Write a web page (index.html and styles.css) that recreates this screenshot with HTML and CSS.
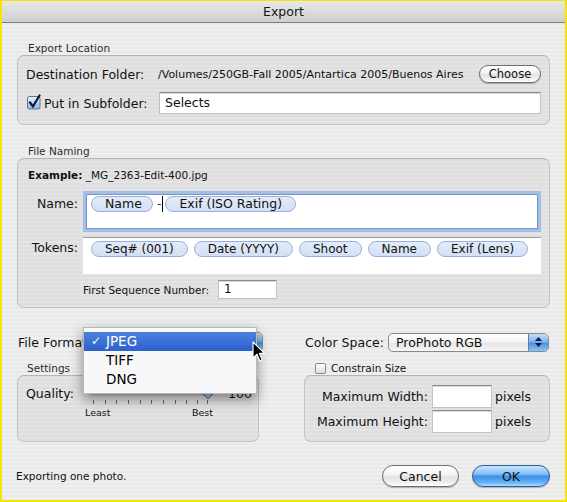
FILE: index.html
```html
<!DOCTYPE html>
<html>
<head>
<meta charset="utf-8">
<title>Export</title>
<link rel="stylesheet" href="styles.css">
</head>
<body>
<div class="frame">
  <div class="titlebar">Export</div>
  <div class="content">
    <div class="group-label">Export Location</div>
    <div class="box loc">
      <div class="loc-grid">
        <span class="lbl">Destination Folder:</span>
        <span class="path">/Volumes/250GB-Fall 2005/Antartica 2005/Buenos Aires</span>
        <span class="btn choose">Choose</span>
        <span class="lbl sub-lbl">
          <svg class="check-big" width="16" height="16" viewBox="0 0 16 16">
            <defs>
              <linearGradient id="cbg" x1="0" y1="0" x2="0" y2="1">
                <stop offset="0" stop-color="#eaf2fd"/>
                <stop offset="0.5" stop-color="#b9d3f2"/>
                <stop offset="1" stop-color="#8fb6e8"/>
              </linearGradient>
            </defs>
            <rect x="1.5" y="2.5" width="12.5" height="12.5" rx="2" fill="url(#cbg)" stroke="#59708f"/>
            <path d="M4 8.5 L7 12.5 L13.5 1.5" fill="none" stroke="#0d1a33" stroke-width="2.2" stroke-linecap="round" stroke-linejoin="round"/>
          </svg>Put in Subfolder:</span>
        <span class="field sub-field">Selects</span>
      </div>
    </div>

    <div class="group-label gap">File Naming</div>
    <div class="box naming">
      <div class="example"><b>Example:</b> _MG_2363-Edit-400.jpg</div>
      <div class="nrow">
        <span class="rlabel">Name:</span>
        <div class="name-field">
          <span class="pill pill-name">Name</span><span class="dash">-</span><span class="caret"></span><span class="pill pill-iso">Exif (ISO Rating)</span>
        </div>
      </div>
      <div class="nrow tok">
        <span class="rlabel">Tokens:</span>
        <div class="tokens-field">
          <span class="pill">Seq# (001)</span>
          <span class="pill">Date (YYYY)</span>
          <span class="pill">Shoot</span>
          <span class="pill">Name</span>
          <span class="pill">Exif (Lens)</span>
        </div>
      </div>
      <div class="seq">
        <span>First Sequence Number:</span><span class="field seq-field">1</span>
      </div>
    </div>

    <div class="lower">
      <div class="col col-left">
        <div class="prow">
          <span class="plabel">File Format:</span>
          <div class="popup fmt"><span class="ptext">JPEG</span><span class="arrows"><svg width="9" height="12" viewBox="0 0 9 12"><path d="M4.5 1 L8 5 L1 5 Z M4.5 11 L8 7 L1 7 Z" fill="#0b1f45"/></svg></span></div>
          <div class="menu">
            <div class="mi sel"><span class="chk">✓</span>JPEG</div>
            <div class="mi">TIFF</div>
            <div class="mi">DNG</div>
          </div>
          <svg class="cursor" width="14" height="22" viewBox="0 0 14 22">
            <path d="M1 1 L1 17 L5 13.2 L7.8 20 L10.2 19 L7.4 12.4 L12.5 12.4 Z" fill="#000" stroke="#fff" stroke-width="1.1" stroke-linejoin="round"/>
          </svg>
        </div>
        <div class="group-label small-gap">Settings</div>
        <div class="box settings">
          <span class="qlabel">Quality:</span>
          <div class="slider">
            <svg width="130" height="22" viewBox="0 0 130 22">
              <rect x="3" y="6" width="124" height="4" rx="2" fill="#cfcfcf" stroke="#8a8a8a" stroke-width="0.8"/>
              <g stroke="#6a6a6a" stroke-width="1">
                <line x1="8.5" y1="16" x2="8.5" y2="20"/>
                <line x1="20.5" y1="16" x2="20.5" y2="20"/>
                <line x1="31.5" y1="16" x2="31.5" y2="20"/>
                <line x1="43.5" y1="16" x2="43.5" y2="20"/>
                <line x1="55.5" y1="16" x2="55.5" y2="20"/>
                <line x1="66.5" y1="16" x2="66.5" y2="20"/>
                <line x1="78.5" y1="16" x2="78.5" y2="20"/>
                <line x1="90.5" y1="16" x2="90.5" y2="20"/>
                <line x1="101.5" y1="16" x2="101.5" y2="20"/>
                <line x1="112.5" y1="16" x2="112.5" y2="20"/>
                <line x1="122.5" y1="16" x2="122.5" y2="20"/>
              </g>
              <defs>
                <linearGradient id="thumb" x1="0" y1="0" x2="1" y2="0">
                  <stop offset="0" stop-color="#4d86c9"/>
                  <stop offset="0.5" stop-color="#a9cdf2"/>
                  <stop offset="1" stop-color="#3f78bd"/>
                </linearGradient>
              </defs>
              <path d="M116 1 L130 1 L130 8 L123 15 L116 8 Z" fill="url(#thumb)" stroke="#35557e" stroke-width="0.8"/>
            </svg>
            <div class="ends"><span>Least</span><span>Best</span></div>
          </div>
          <span class="qval">100</span>
        </div>
      </div>

      <div class="col col-right">
        <div class="prow">
          <span class="plabel">Color Space:</span>
          <div class="popup cs"><span class="ptext">ProPhoto RGB</span><span class="arrows"><svg width="9" height="12" viewBox="0 0 9 12"><path d="M4.5 1 L8 5 L1 5 Z M4.5 11 L8 7 L1 7 Z" fill="#0b1f45"/></svg></span></div>
        </div>
        <div class="constrain"><span class="cb"></span>Constrain Size</div>
        <div class="box size">
          <div class="size-grid">
            <span class="slbl">Maximum Width:</span><span class="field sfield"></span><span class="unit">pixels</span>
            <span class="slbl">Maximum Height:</span><span class="field sfield"></span><span class="unit">pixels</span>
          </div>
        </div>
      </div>
    </div>

    <div class="footer">
      <span class="status">Exporting one photo.</span>
      <span class="btn cancel">Cancel</span>
      <span class="btn ok">OK</span>
    </div>
  </div>
</div>
</body>
</html>
```

FILE: styles.css
```css
html, body {
  margin: 0;
  padding: 0;
}
body {
  font-family: "DejaVu Sans", "Lucida Grande", sans-serif;
  font-size: 12.5px;
  color: #111;
}
.frame {
  box-sizing: border-box;
  width: 567px;
  height: 502px;
  border: 2px solid #f7e400;
  border-top-width: 1px;
  background: repeating-linear-gradient(to bottom, #efefef 0, #efefef 2px, #e9e9e9 2px, #e9e9e9 4px);
  overflow: hidden;
}
.titlebar {
  height: 21px;
  line-height: 22px;
  text-align: center;
  background: linear-gradient(#e8e8e8, #cfcfcf);
  border-bottom: 1px solid #7d7d7d;
  color: #151515;
}
.content {
  padding: 18px 15px 0 15px;
}
.group-label {
  height: 14px;
  line-height: 14px;
  font-size: 10.5px;
  color: #2c2c2c;
  padding-left: 11px;
}
.group-label.gap { margin-top: 19px; }
.group-label.small-gap { margin-top: 9px; padding-left: 10px; }
.box {
  box-sizing: border-box;
  border: 1px solid #c3c3c3;
  border-top-color: #b4b4b4;
  border-radius: 7px;
  background: rgba(0, 0, 0, 0.045);
}
.loc {
  height: 70px;
  padding: 8px 8px 0 8px;
}
.loc-grid {
  display: grid;
  grid-template-columns: 132px 1fr 62px;
  grid-template-rows: 20px 22px;
  row-gap: 8px;
  align-items: center;
}
.lbl { white-space: nowrap; }
.path {
  font-size: 11px;
  white-space: nowrap;
  color: #111;
}
.sub-lbl {
  display: flex;
  align-items: center;
}
.check-big { margin-right: 2px; margin-top: -3px; }
.field {
  box-sizing: border-box;
  background: #fff;
  border: 1px solid #c2c2c2;
  border-top-color: #8a8a8a;
  box-shadow: inset 0 1px 0 #d9d9d9;
}
.sub-field {
  grid-column: 2 / 4;
  height: 22px;
  line-height: 20px;
  padding-left: 5px;
  margin-left: 1px;
}
.btn {
  box-sizing: border-box;
  display: inline-flex;
  align-items: center;
  justify-content: center;
  border-radius: 11px;
  border: 1px solid #6f6f6f;
  background: linear-gradient(#ffffff 0%, #f3f3f3 45%, #e2e2e2 52%, #eeeeee 80%, #ffffff 100%);
  box-shadow: 0 1px 1px rgba(0,0,0,0.25);
}
.choose {
  height: 18px;
  font-size: 11.5px;
}
.naming {
  height: 150px;
  padding: 10px 8px 0 0;
}
.example {
  margin-left: 10px;
  font-size: 10.5px;
  line-height: 13px;
  height: 13px;
}
.example b { font-weight: bold; }
.nrow {
  display: flex;
  margin-top: 9px;
  gap: 5px;
}
.nrow.tok { margin-top: 5px; }
.rlabel {
  width: 60px;
  text-align: right;
  line-height: 16px;
  padding-top: 5px;
  flex: none;
}
.tok .rlabel { padding-top: 3px; }
.name-field {
  box-sizing: border-box;
  flex: 1;
  height: 41px;
  background: #fff;
  border: 3px solid #a3bfe3;
  box-shadow: inset 0 0 0 1px #7895c2;
  padding: 2px 5px;
  display: flex;
  align-items: flex-start;
}
.pill {
  box-sizing: border-box;
  display: inline-flex;
  align-items: center;
  height: 16px;
  padding: 0 13px;
  border: 1px solid #98b1d8;
  border-radius: 8px;
  background: linear-gradient(#e3ebf8, #d3e0f4);
  white-space: nowrap;
  line-height: 14px;
}
.pill-name { padding: 0 10px 0 13px; }
.dash {
  line-height: 16px;
  margin-left: 4px;
  color: #333;
}
.caret {
  width: 1px;
  height: 16px;
  background: #000;
  margin: 0 2px 0 1px;
}
.tokens-field {
  box-sizing: border-box;
  flex: 1;
  height: 37px;
  background: #fff;
  border-top: 1px solid #9a9a9a;
  padding: 3px 8px;
  display: flex;
  align-items: flex-start;
  gap: 6px;
  overflow: hidden;
}
.tokens-field .pill {
  padding: 0 13px;
  font-size: 12px;
}
.seq {
  margin-top: 6px;
  margin-left: 65px;
  display: flex;
  align-items: center;
  font-size: 10.5px;
  height: 19px;
}
.seq-field {
  width: 59px;
  height: 19px;
  line-height: 17px;
  margin-left: 9px;
  padding-left: 5px;
  font-size: 12px;
}
.lower {
  display: flex;
  gap: 45px;
  margin-top: 24px;
}
.col-left { width: 242px; }
.col-right { width: 246px; }
.prow {
  position: relative;
  display: flex;
  align-items: center;
  height: 20px;
}
.plabel {
  margin-left: 1px;
  white-space: nowrap;
}
.popup {
  box-sizing: border-box;
  height: 20px;
  border: 1px solid #8a8a8a;
  border-radius: 5px;
  background: linear-gradient(#ffffff 0%, #f4f4f4 45%, #e6e6e6 55%, #f5f5f5 100%);
  display: flex;
  align-items: center;
  position: relative;
  overflow: hidden;
}
.ptext {
  flex: 1;
  padding-left: 7px;
}
.arrows {
  width: 19px;
  height: 100%;
  display: flex;
  align-items: center;
  justify-content: center;
  background: linear-gradient(#c4defa 0%, #7fb3ec 45%, #4d91e0 55%, #8cc4f6 100%);
  border-left: 1px solid #5a7fae;
}
.fmt {
  width: 172px;
  margin-left: auto;
  margin-right: -4px;
}
.cs {
  width: 161px;
  height: 19px;
  margin-left: auto;
  margin-right: 1px;
}
.menu {
  position: absolute;
  left: 66px;
  top: -5px;
  width: 174px;
  box-sizing: border-box;
  padding: 4px 0;
  background: rgba(248, 248, 248, 0.98);
  border: 1px solid #b8b8b8;
  box-shadow: 0 5px 12px rgba(0, 0, 0, 0.45);
  z-index: 5;
}
.mi {
  height: 19px;
  line-height: 19px;
  padding-left: 22px;
  font-size: 13.5px;
  color: #000;
  position: relative;
}
.mi.sel {
  background: linear-gradient(#4b7fdd, #2e62cc);
  color: #fff;
}
.chk {
  position: absolute;
  left: 7px;
  top: 0;
  font-size: 12px;
}
.cursor {
  position: absolute;
  left: 235px;
  top: 9px;
  z-index: 6;
}
.settings {
  height: 67px;
  display: flex;
  align-items: flex-start;
  padding: 9px 0 0 8px;
}
.qlabel {
  width: 59px;
  line-height: 18px;
}
.slider {
  width: 130px;
  margin-top: -1px;
}
.slider svg { display: block; }
.ends {
  display: flex;
  justify-content: space-between;
  width: 128px;
  font-size: 9.5px;
  line-height: 14px;
  color: #111;
}
.qval {
  margin-left: 13px;
  line-height: 18px;
}
.constrain {
  margin-top: 9px;
  height: 14px;
  display: flex;
  align-items: center;
  font-size: 10.5px;
  padding-left: 11px;
}
.cb {
  box-sizing: border-box;
  width: 11px;
  height: 11px;
  border: 1px solid #8a8a8a;
  border-radius: 2px;
  background: linear-gradient(#ffffff, #dedede);
  margin-right: 5px;
}
.size {
  height: 67px;
  padding-top: 9px;
}
.size-grid {
  display: grid;
  grid-template-columns: 123px 60px auto;
  grid-auto-rows: 23px;
  row-gap: 2px;
  column-gap: 4px;
  align-items: center;
}
.slbl {
  text-align: right;
  white-space: nowrap;
}
.sfield {
  height: 23px;
}
.unit { margin-left: -1px; }
.footer {
  display: flex;
  align-items: center;
  height: 22px;
  margin-top: 23px;
}
.status {
  font-size: 10.5px;
  margin-left: -1px;
}
.cancel {
  margin-left: auto;
  width: 77px;
  height: 22px;
}
.ok {
  margin-left: 13px;
  width: 78px;
  height: 22px;
  border-color: #2c5c9e;
  background: linear-gradient(#cce7ff 0%, #7fc0f8 40%, #3d8fe8 52%, #64b2f6 82%, #a8deff 100%);
}
```
